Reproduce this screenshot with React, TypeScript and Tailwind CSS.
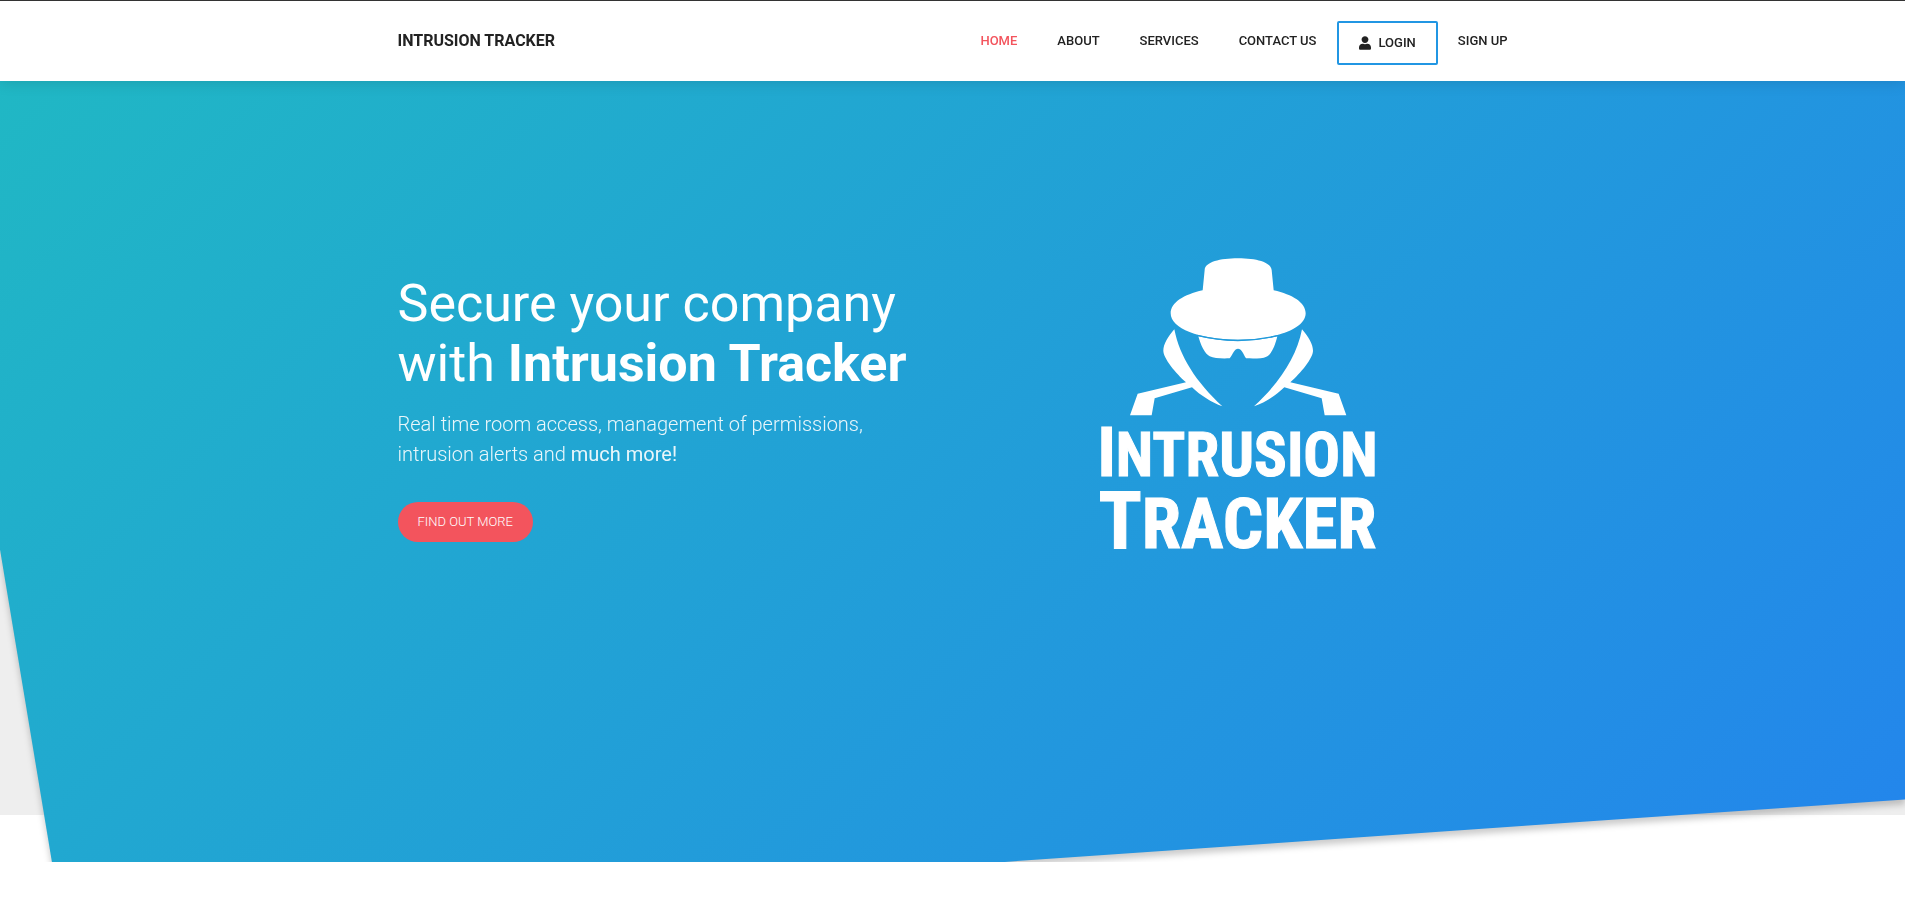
import { FaUser } from "react-icons/fa";

const links = [
  { label: "Home", href: "#home", active: true },
  { label: "About", href: "#about", active: false },
  { label: "Services", href: "#services", active: false },
  { label: "Contact Us", href: "#contact", active: false },
];

function Header() {
  return (
    <header className="fixed inset-x-0 top-0 z-10 border-t border-[#333] bg-white shadow-[0_0_15px_rgba(0,0,0,0.15)]">
      <div className="mx-auto flex h-20 max-w-[1140px] items-center justify-between px-[15px] font-medium text-[#222] uppercase">
        <a href="#home" className="text-base font-bold">
          Intrusion Tracker
        </a>
        <nav className="flex items-center text-[13px]">
          {links.map((link) => (
            <a
              key={link.label}
              href={link.href}
              className={link.active ? "px-5 text-[#f3545d]" : "px-5"}
            >
              {link.label}
            </a>
          ))}
          <a
            href="#login"
            className="mt-1 flex h-11 items-center gap-2 rounded-xs border-2 border-[#2196e3] px-5"
          >
            <FaUser className="h-3.5 w-3" aria-hidden="true" />
            Login
          </a>
          <a href="#signup" className="pl-5">
            Sign Up
          </a>
        </nav>
      </div>
    </header>
  );
}

function Logo() {
  return (
    <div className="flex flex-col items-center text-white">
      <svg viewBox="58 56 828 474" className="h-[158px] w-[276px]" fill="currentColor" aria-hidden="true">
        <path d="M366 153L372 92C374 68 418 57 472 57S570 68 573 92L579 153C636 166 675 190 675 222C675 267 590 301 472 301S270 267 270 222C270 190 309 166 366 153Z" />
        <path d="M353 291Q472 320 590 291C583 322 571 346 557 352C545 358 520 358 496 357C488 343 482 328 472 328S457 343 447 357C423 358 400 357 387 351C373 344 360 318 353 291Z" />
        <path
          d="M350 288Q472 318 594 288"
          fill="none"
          stroke="#229adb"
          strokeWidth="4"
        />
        <path d="M281 270C297 352 346 428 425 501C392 489 360 469 334 444L222 477L213 528H148L171 463L316 429C285 401 248 357 248 334C248 315 262 292 281 270Z" />
        <path d="M664 270C648 352 599 428 520 501C553 489 585 469 611 444L723 477L732 528H797L774 463L629 429C660 401 697 357 697 334C697 315 683 292 664 270Z" />
      </svg>
      <p className="mt-1 text-center font-['Liberation_Sans_Narrow','Roboto_Condensed','DejaVu_Sans_Condensed',sans-serif] leading-[66px] font-bold uppercase [-webkit-text-stroke:1px_white]">
        <span className="block text-[61px] first-letter:text-[68px]">Intrusion</span>
        <span className="block text-[71px] first-letter:text-[80px]">Tracker</span>
      </p>
    </div>
  );
}

function Hero() {
  return (
    <section id="home" className="relative flex min-h-[90vh] items-center bg-[#eee]">
      <div className="absolute inset-x-0 top-0 -bottom-[47px] overflow-hidden">
        <div className="h-full drop-shadow-[0_5px_3px_rgba(0,0,0,0.2)]">
          <div className="h-full bg-[linear-gradient(135deg,#20b9c3,#2385ec)] [clip-path:polygon(0_0,100%_0,100%_calc(100%-63px),52.4%_100%,52px_100%,0_calc(100%-313px))]" />
        </div>
      </div>
      <div className="relative mx-auto grid w-full max-w-[1140px] grid-cols-2 items-center">
        <div className="px-[15px] text-white">
          <h1 className="text-[52px] leading-[60px] font-normal">
            Secure your company
            <br />
            with <strong className="font-bold">Intrusion Tracker</strong>
          </h1>
          <p className="mt-[15px] text-xl leading-[30px] font-light opacity-90">
            Real time room access, management of permissions,
            <br />
            intrusion alerts and <strong className="font-normal">much more!</strong>
          </p>
          <a
            href="#about"
            className="mt-[33px] inline-flex h-10 items-center rounded-full bg-[#f3545d] px-5 text-[13px] font-light uppercase"
          >
            Find out more
          </a>
        </div>
        <Logo />
      </div>
    </section>
  );
}

export default function App() {
  return (
    <div className="min-h-screen bg-white font-[Roboto,sans-serif]">
      <Header />
      <main>
        <Hero />
      </main>
    </div>
  );
}
